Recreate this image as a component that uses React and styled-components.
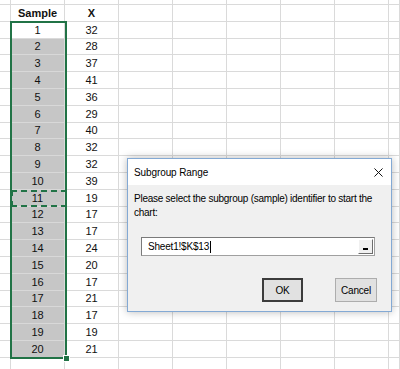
import React from 'react'
import styled, { createGlobalStyle } from 'styled-components'

const GREEN = '#217346'
const values = [32, 28, 37, 41, 36, 29, 40, 32, 32, 39, 19, 17, 17, 24, 20, 17, 21, 17, 19, 21]
const ROW_COUNT = 23
const COL_COUNT = 9

const GlobalStyle = createGlobalStyle`
  html, body {
    margin: 0;
    padding: 0;
    background: #fff;
  }
`

const getCell = (row, col) => {
  // row 0 is the clipped row above the header, row 1 holds the headers
  if (row === 1 && col === 1) return { text: 'Sample', bold: true }
  if (row === 1 && col === 2) return { text: 'X', bold: true }
  const i = row - 2
  if (i >= 0 && i < values.length) {
    if (col === 1) return { text: i + 1, selected: i > 0 }
    if (col === 2) return { text: values[i] }
  }
  return { text: '' }
}

const App = () => {
  const cells = []
  for (let r = 0; r <= ROW_COUNT; r++) {
    for (let c = 0; c < COL_COUNT; c++) {
      const cell = getCell(r, c)
      cells.push(
        <Cell key={`${r}-${c}`} $selected={cell.selected} $bold={cell.bold}>
          {cell.text}
        </Cell>
      )
    }
  }

  return (
    <>
      <GlobalStyle/>
      <Screen>
        <Sheet>{cells}</Sheet>
        <Selection>
          <FillHandle/>
        </Selection>
        <CopyMarquee/>

        <Dialog>
          <TitleBar>
            <Title>Subgroup Range</Title>
            <CloseIcon viewBox="0 0 10 10">
              <path d="M0.5 0.5 L9.5 9.5 M9.5 0.5 L0.5 9.5" stroke="#111" strokeWidth="1.1" fill="none"/>
            </CloseIcon>
          </TitleBar>
          <Body>
            <Message>
              Please select the subgroup (sample) identifier to start the chart:
            </Message>
            <RefInput>
              <RefText>Sheet1!$K$13<Caret/></RefText>
              <CollapseButton>
                <Underscore/>
              </CollapseButton>
            </RefInput>
            <Buttons>
              <Button $default>OK</Button>
              <Button>Cancel</Button>
            </Buttons>
          </Body>
        </Dialog>
      </Screen>
    </>
  )
}

const Screen = styled.div`
    position: relative;
    width: 400px;
    height: 369px;
    overflow: hidden;
    background: #fff;
`

const Sheet = styled.div`
    display: grid;
    grid-template-columns: 11px repeat(7, 54px) 1fr;
    grid-template-rows: 5px repeat(${ROW_COUNT}, 16.8px);
    font-family: "Liberation Sans", Arial, sans-serif;
    font-size: 11px;
    color: #111;
`

const Cell = styled.div`
    box-sizing: border-box;
    border-right: 1px solid #dadada;
    border-bottom: 1px solid #dadada;
    display: flex;
    align-items: flex-end;
    justify-content: center;
    padding-bottom: 1px;
    overflow: hidden;
    line-height: 13px;
    font-weight: ${props => props.$bold ? 'bold' : 'normal'};
    background: ${props => props.$selected ? '#c6c6c6' : 'transparent'};
    border-bottom-color: ${props => props.$selected ? '#d8d8d8' : '#dadada'};
`

const Selection = styled.div`
    position: absolute;
    left: 10px;
    top: 21px;
    width: 57px;
    height: 338px;
    box-sizing: border-box;
    border: 2px solid ${GREEN};
    pointer-events: none;
`

const FillHandle = styled.div`
    position: absolute;
    right: -5px;
    bottom: -5px;
    width: 5px;
    height: 5px;
    background: ${GREEN};
    border: 1px solid #fff;
`

const CopyMarquee = styled.div`
    position: absolute;
    left: 11px;
    top: 190px;
    width: 56px;
    height: 17px;
    box-sizing: border-box;
    border: 2px dashed ${GREEN};
`

const Dialog = styled.div`
    position: absolute;
    left: 127px;
    top: 158px;
    width: 265px;
    height: 154px;
    box-sizing: border-box;
    border: 1px solid #83a9d4;
    background: #f0f0f0;
    box-shadow: 0 0 8px rgba(0, 0, 0, 0.28);
    display: flex;
    flex-direction: column;
    font-family: "Liberation Sans", Arial, sans-serif;
    font-size: 10px;
    color: #000;
`

const TitleBar = styled.div`
    height: 26px;
    background: #fff;
    display: flex;
    align-items: center;
    justify-content: space-between;
    padding: 0 8px 0 6px;
`

const Title = styled.span`
    font-size: 10px;
    letter-spacing: -0.1px;
    padding-top: 1px;
`

const CloseIcon = styled.svg`
    width: 9px;
    height: 9px;
`

const Body = styled.div`
    display: flex;
    flex-direction: column;
    padding: 7px 0 0 6px;
`

const Message = styled.p`
    margin: 0;
    width: 250px;
    line-height: 14px;
    letter-spacing: -0.25px;
`

const RefInput = styled.div`
    margin: 17px 0 0 7px;
    width: 234px;
    height: 19px;
    box-sizing: border-box;
    border: 1px solid #7a7a7a;
    border-right-color: #a0a0a0;
    border-bottom-color: #a0a0a0;
    background: #fff;
    display: flex;
    align-items: center;
    justify-content: space-between;
    padding: 0 1px 0 6px;
`

const RefText = styled.span`
    display: flex;
    align-items: center;
    letter-spacing: -0.2px;
`

const Caret = styled.span`
    display: inline-block;
    width: 1px;
    height: 12px;
    background: #000;
    margin-left: 1px;
`

const CollapseButton = styled.div`
    width: 15px;
    height: 15px;
    box-sizing: border-box;
    border: 1px solid #fff;
    border-right-color: #6d6d6d;
    border-bottom-color: #6d6d6d;
    background: #f0f0f0;
    display: flex;
    align-items: flex-end;
    justify-content: center;
    padding-bottom: 3px;
`

const Underscore = styled.span`
    width: 5px;
    height: 2px;
    background: #000;
`

const Buttons = styled.div`
    display: flex;
    justify-content: flex-end;
    gap: 32px;
    margin: 22px 14px 0 0;
`

const Button = styled.div`
    width: ${props => props.$default ? '41px' : '42px'};
    height: 24px;
    box-sizing: border-box;
    border: ${props => props.$default ? '2px solid #3c3c3c' : '1px solid #adadad'};
    background: #e1e1e1;
    display: flex;
    align-items: center;
    justify-content: center;
    font-size: 10px;
    letter-spacing: -0.2px;
`

export default App
